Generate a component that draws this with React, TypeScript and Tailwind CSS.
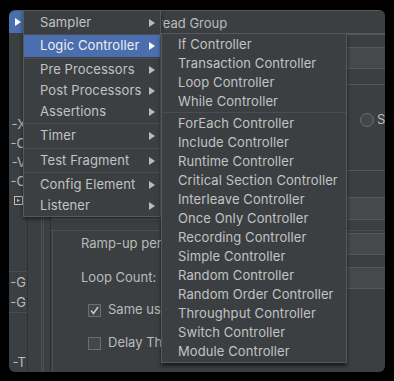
import React from "react";

type Row = { kind: "item"; label: string; h: string; active?: boolean; arrow?: boolean } | { kind: "sep"; h: string };

const addMenu: Row[] = [
  { kind: "item", label: "Sampler", h: "h-[21px]", arrow: true },
  { kind: "sep", h: "h-[2px]" },
  { kind: "item", label: "Logic Controller", h: "h-[22px]", arrow: true, active: true },
  { kind: "sep", h: "h-[2px]" },
  { kind: "item", label: "Pre Processors", h: "h-[21px]", arrow: true },
  { kind: "item", label: "Post Processors", h: "h-[21px]", arrow: true },
  { kind: "item", label: "Assertions", h: "h-[21px]", arrow: true },
  { kind: "sep", h: "h-[3px]" },
  { kind: "item", label: "Timer", h: "h-[22px]", arrow: true },
  { kind: "sep", h: "h-[3px]" },
  { kind: "item", label: "Test Fragment", h: "h-[21px]", arrow: true },
  { kind: "sep", h: "h-[3px]" },
  { kind: "item", label: "Config Element", h: "h-[21px]", arrow: true },
  { kind: "item", label: "Listener", h: "h-[21px]", arrow: true },
];

const controllersTop = ["If Controller", "Transaction Controller", "Loop Controller", "While Controller"];
const controllersRest = [
  "ForEach Controller",
  "Include Controller",
  "Runtime Controller",
  "Critical Section Controller",
  "Interleave Controller",
  "Once Only Controller",
  "Recording Controller",
  "Simple Controller",
  "Random Controller",
  "Random Order Controller",
  "Throughput Controller",
  "Switch Controller",
  "Module Controller",
];

const font = { fontFamily: "Inter, 'Liberation Sans', sans-serif" };

function Arrow({ className = "" }: { className?: string }) {
  return (
    <svg width="6" height="8" viewBox="0 0 6 8" className={className} aria-hidden="true">
      <path d="M0 0L6 4L0 8Z" fill="currentColor" />
    </svg>
  );
}

function TreeLabel({ text, h }: { text: string; h: string }) {
  return (
    <div className={`${h} flex items-center justify-end overflow-hidden whitespace-nowrap pr-[1px] text-[13px] text-[#bbbbbb]`}>
      {text}
    </div>
  );
}

function Checkbox({ checked }: { checked?: boolean }) {
  return (
    <div className="flex h-[13px] w-[13px] shrink-0 items-center justify-center border border-[#6b6e70] bg-[#43474a]">
      {checked && (
        <svg width="11" height="11" viewBox="0 0 11 11" aria-hidden="true">
          <path d="M2 5.5L4.5 8.5L9 2" fill="none" stroke="#c4c4c4" strokeWidth="1.6" />
        </svg>
      )}
    </div>
  );
}

export default function App() {
  return (
    <div className="relative h-[381px] w-[394px] overflow-hidden bg-black" style={font}>
      {/* JMeter window behind the menus */}
      <div className="ml-[9px] pt-[10px]">
        <div className="flex h-[362px] w-[376px] overflow-hidden rounded-[6px] border-t border-[#55585a] bg-[#3c3f41]">
          {/* tree */}
          <div className="flex w-[18px] flex-col">
            <div className="flex h-[22px] items-center bg-[#4b6eaf] pl-[6px] text-white">
              <Arrow />
            </div>
            <div className="h-[83px]" />
            <TreeLabel text="-X" h="h-[19px]" />
            <TreeLabel text="-C" h="h-[19px]" />
            <TreeLabel text="-V" h="h-[19px]" />
            <TreeLabel text="-C" h="h-[19px]" />
            <div className="flex h-[19px] items-center justify-end pr-[3px]">
              <svg width="10" height="9" viewBox="0 0 10 9" aria-hidden="true">
                <rect x="0.5" y="0.5" width="8" height="8" fill="none" stroke="#bbbbbb" />
                <path d="M3 3L6 4.5L3 6Z" fill="#bbbbbb" />
              </svg>
            </div>
            <div className="h-[62px]" />
            <div className="border-y border-[#4a4d4f]">
              <TreeLabel text="-G" h="h-[20px]" />
              <TreeLabel text="-G" h="h-[20px]" />
            </div>
            <div className="h-[40px]" />
            <TreeLabel text="-T" h="h-[19px]" />
          </div>

          {/* splitter */}
          <div className="flex w-[23px] border-l border-[#2f3133]">
            <div className="w-[14px] border-r border-[#4d5052]" />
            <div className="w-[2px] border-r border-[#4d5052]" />
          </div>

          {/* right panel */}
          <div className="flex min-w-0 flex-1 flex-col border-l border-[#2f3133]">
            {/* title, partly under the menus */}
            <div className="flex h-[22px] items-center pl-[111px] pt-[4px]">
              <div className="overflow-hidden whitespace-nowrap text-[13px] text-[#bbbbbb]">
                <span className="-ml-[20px] inline-block">Thread Group</span>
              </div>
            </div>
            <div className="h-[2px] border-y border-[#55585a]" />
            <div className="h-[12px]" />
            <div className="h-[22px] border-y border-[#55585a] bg-[#45494a]" />
            <div className="h-[15px]" />
            <div className="h-[1px] bg-[#55585a]" />
            <div className="flex h-[70px] items-center justify-end">
              <div className="flex items-center gap-[3px]">
                <div className="h-[14px] w-[14px] rounded-full border border-[#6b6e70] bg-[#43474a]" />
                <span className="w-[8px] overflow-hidden text-[13px] text-[#bbbbbb]">S</span>
              </div>
            </div>
            <div className="h-[15px]" />
            <div className="h-[1px] bg-[#55585a]" />
            <div className="h-[26px]" />
            <div className="h-[23px] border-y border-[#55585a] bg-[#45494a]" />
            <div className="h-[10px]" />

            {/* thread properties */}
            <div className="flex flex-1 border-t border-[#4d5052]">
              <div className="w-[2px] border-r border-[#4d5052]" />
              <div className="flex w-[108px] flex-col overflow-hidden whitespace-nowrap pl-[28px] text-[13px] text-[#bbbbbb]">
                <div className="h-[2px]" />
                <div className="flex h-[22px] items-center">Ramp-up period (seconds):</div>
                <div className="h-[12px]" />
                <div className="flex h-[22px] items-center">Loop Count:</div>
                <div className="h-[9px]" />
                <div className="flex h-[24px] items-center gap-[7px] pl-[7px]">
                  <Checkbox checked />
                  <span>Same user on each iteration</span>
                </div>
                <div className="h-[9px]" />
                <div className="flex h-[24px] items-center gap-[7px] pl-[7px]">
                  <Checkbox />
                  <span>Delay Thread creation until needed</span>
                </div>
              </div>
              <div className="flex-1" />
              <div className="flex w-[40px] flex-col">
                <div className="h-[2px]" />
                <div className="h-[22px] border-y border-[#55585a] bg-[#45494a]" />
                <div className="h-[12px]" />
                <div className="h-[22px] border-y border-[#55585a] bg-[#45494a]" />
              </div>
            </div>
          </div>
        </div>
      </div>

      {/* Add menu */}
      <div className="absolute left-[23px] top-[10px] w-[138px] whitespace-nowrap border border-[#56595b] bg-[#3c3f41] pt-[1px] text-[13px] tracking-[0.1px] text-[#c2c3c4] shadow-[0_2px_4px_rgba(0,0,0,0.5)]">
        {addMenu.map((r, i) =>
          r.kind === "sep" ? (
            <div key={i} className={`${r.h} flex items-center`}>
              <div className="h-[1px] w-full bg-[#4a4d4f]" />
            </div>
          ) : (
            <div
              key={i}
              className={`${r.h} flex items-center justify-between pl-[16px] pr-[5px] ${
                r.active ? "bg-[#4b6eaf] text-[#eeeeee]" : ""
              }`}
            >
              <span>{r.label}</span>
              {r.arrow && <Arrow className={r.active ? "text-white" : "text-[#bbbbbb]"} />}
            </div>
          )
        )}
      </div>

      {/* Logic Controller submenu */}
      <div className="absolute left-[161px] top-[33px] w-[186px] whitespace-nowrap border border-[#56595b] bg-[#3c3f41] py-[1px] text-[13px] tracking-[0.1px] text-[#c2c3c4] shadow-[0_3px_4px_rgba(0,0,0,0.6)]">
        {controllersTop.map((c) => (
          <div key={c} className="flex h-[19px] items-center pl-[16px]">
            {c}
          </div>
        ))}
        <div className="flex h-[3px] items-center">
          <div className="h-[1px] w-full bg-[#4a4d4f]" />
        </div>
        {controllersRest.map((c) => (
          <div key={c} className="flex h-[19px] items-center pl-[16px]">
            {c}
          </div>
        ))}
      </div>
    </div>
  );
}
